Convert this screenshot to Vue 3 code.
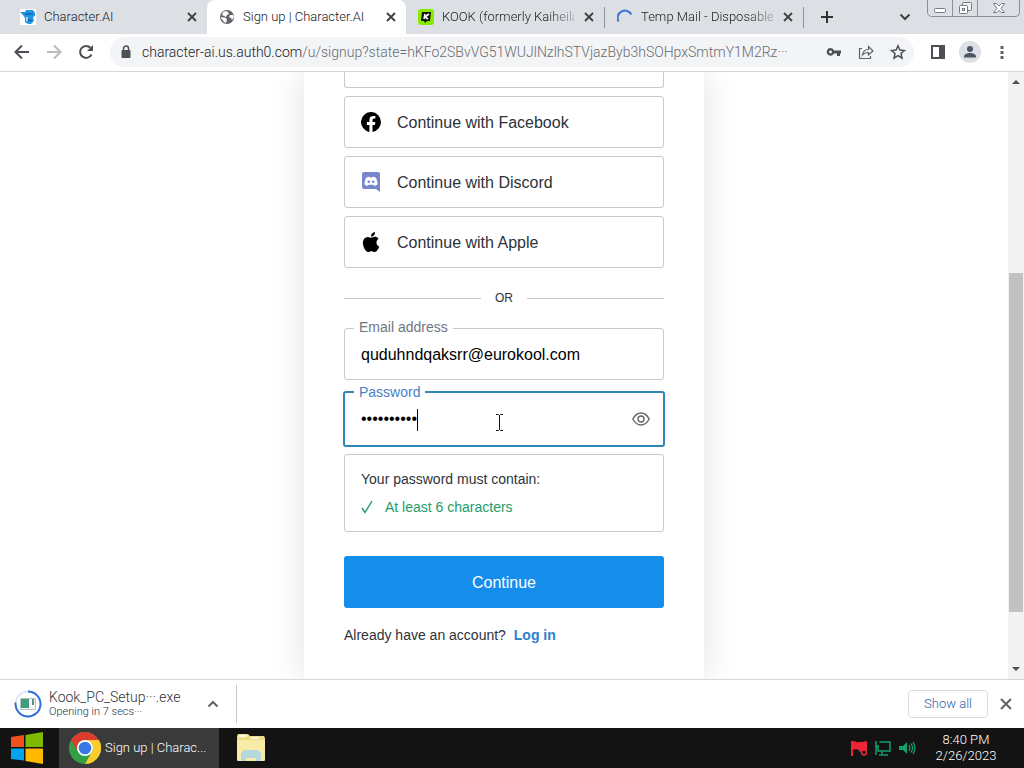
<script setup>
import { ref } from "vue";

const tabs = [
  { title: "Character.AI", icon: "character" },
  { title: "Sign up | Character.AI", icon: "globe", active: true },
  { title: "KOOK (formerly Kaiheila", icon: "kook", fade: true },
  { title: "Temp Mail - Disposable", icon: "loading", fade: true },
];

const providers = ["Facebook", "Discord", "Apple"];

const email = ref("quduhndqaksrr@eurokool.com");
const password = ref("abcdef1234");
const urlPath =
  "/u/signup?state=hKFo2SBvVG51WUJlNzlhSTVjazByb3hSOHpxSmtmY1M2Rz···";
</script>

<template>
  <div class="desktop">
    <header class="tab-strip">
      <div
        v-for="tab in tabs"
        :key="tab.title"
        class="tab"
        :class="{ active: tab.active }"
      >
        <svg v-if="tab.icon === 'character'" class="favicon" viewBox="0 0 16 16">
          <rect width="16" height="16" fill="#fff" />
          <path d="M0 3l5 0 1-2h7l2 3v3l-2 1 1 4-3 3H8l-3-2V9L3 6z" fill="#2196e3" />
          <path d="M5 5h8M8 9l1 3 3-1" stroke="#134a9c" fill="none" />
          <path d="M6 8h2v4H6z" fill="#9fd8f5" />
        </svg>
        <svg v-else-if="tab.icon === 'globe'" class="favicon" viewBox="0 0 16 16">
          <circle cx="8" cy="8" r="7" fill="#5f6368" />
          <path d="M2 8l5 1 1 2-1 3-2-1-3-4zM7 2l2 1 1 2-2 1-1 2-4-2 1-3zM14 6l-3 0-1 2 2 1 1 2 2-3z" fill="#fff" />
        </svg>
        <svg v-else-if="tab.icon === 'kook'" class="favicon" viewBox="0 0 16 16">
          <rect width="16" height="16" rx="3" fill="#87eb00" />
          <path d="M4 3h9l-1 9H9l-2 2-1-2H3z" fill="#111" />
          <path d="M7 5L6 10M11 5L7 8l3 2" stroke="#fff" stroke-width="1.6" fill="none" />
        </svg>
        <svg v-else class="favicon" viewBox="0 0 16 16">
          <path d="M1.500 12.500A7 7 0 0 1 14.500 5.500" fill="none" stroke="#3b78d8" stroke-width="2" />
        </svg>
        <span class="tab-title" :class="{ fade: tab.fade }">{{ tab.title }}</span>
        <button class="icon-button tab-close" aria-label="Close tab">
          <svg width="10" height="10" viewBox="0 0 10 10">
            <path d="M1 1l8 8M9 1l-8 8" stroke="#3c4043" stroke-width="1.8" />
          </svg>
        </button>
      </div>
      <button class="icon-button new-tab" aria-label="New tab">
        <svg width="14" height="14" viewBox="0 0 14 14">
          <path d="M7 1v12M1 7h12" stroke="#303336" stroke-width="2" />
        </svg>
      </button>
      <button class="icon-button tab-search" aria-label="Search tabs">
        <svg width="12" height="8" viewBox="0 0 12 8">
          <path d="M1.500 1.500L6 6l4.500-4.500" fill="none" stroke="#3c4043" stroke-width="2" />
        </svg>
      </button>
      <div class="window-controls">
        <button aria-label="Minimize">
          <svg width="14" height="16" viewBox="0 0 14 16">
            <rect x="1.500" y="8.500" width="11" height="4" rx="1" fill="#fff" stroke="#737b86" />
          </svg>
        </button>
        <button aria-label="Restore">
          <svg width="14" height="16" viewBox="0 0 14 16">
            <rect x="4.500" y="2.500" width="9" height="8" rx="1" fill="#eef0f3" stroke="#737b86" />
            <rect x="1.500" y="5.500" width="8" height="8" rx="1" fill="#fff" stroke="#737b86" />
            <rect x="4.500" y="8.500" width="2" height="2" fill="none" stroke="#737b86" />
          </svg>
        </button>
        <button class="wide" aria-label="Close">
          <svg width="14" height="16" viewBox="0 0 14 16">
            <path d="M1.500 3.500h3L7 6l2.500-2.500h3L9 8.500l3.500 4h-3L7 10.500l-2.500 2h-3L5 8.500z" fill="#fff" stroke="#737b86" />
          </svg>
        </button>
      </div>
    </header>

    <nav class="toolbar">
      <button class="icon-button" aria-label="Back">
        <svg width="16" height="16" viewBox="0 0 16 16">
          <path d="M15 8H2M8 1.500L1.500 8 8 14.500" fill="none" stroke="#4c5054" stroke-width="2" />
        </svg>
      </button>
      <button class="icon-button" aria-label="Forward">
        <svg width="16" height="16" viewBox="0 0 16 16">
          <path d="M1 8h13M8 1.500L14.500 8 8 14.500" fill="none" stroke="#b9bbbe" stroke-width="2" />
        </svg>
      </button>
      <button class="icon-button" aria-label="Reload">
        <svg width="16" height="16" viewBox="0 0 16 16">
          <path d="M13.500 10.500A6 6 0 1 1 12.500 3.800" fill="none" stroke="#4c5054" stroke-width="2" />
          <path d="M15 1v6H9z" fill="#4c5054" />
        </svg>
      </button>
      <div class="address">
        <svg class="lock" width="10" height="14" viewBox="0 0 10 14">
          <rect x="0.500" y="5" width="9" height="8" rx="1" fill="#4c5054" />
          <path d="M2.500 6V3.500a2.500 2.500 0 0 1 5 0V6" fill="none" stroke="#4c5054" stroke-width="1.5" />
        </svg>
        <div class="url"><span class="host">character-ai.us.auth0.com</span>{{ urlPath }}</div>
        <button class="icon-button" aria-label="Passwords">
          <svg width="16" height="16" viewBox="0 0 16 16">
            <path d="M4.500 4a3.800 3.800 0 1 0 3.500 5.500h3V12h3V9.500h1v-3H8A3.800 3.800 0 0 0 4.500 4zm0 2.500a1.400 1.400 0 1 1 0 2.900 1.400 1.400 0 0 1 0-2.900z" fill="#4c5054" fill-rule="evenodd" />
          </svg>
        </button>
        <button class="icon-button" aria-label="Share">
          <svg width="16" height="16" viewBox="0 0 16 16">
            <path d="M4 4.500H1.500v10h11V12M4.500 11c.5-4 2.500-5.500 6-5.500V2.500L15 7l-4.500 4V8.500c-3 0-4.500.500-6 2.500z" fill="none" stroke="#5f6368" stroke-width="1.200" />
          </svg>
        </button>
        <button class="icon-button" aria-label="Bookmark">
          <svg width="16" height="16" viewBox="0 0 16 16">
            <path d="M8 1.800l1.900 4.200 4.600.500-3.500 3 1 4.600-4-2.400-4 2.400 1-4.600-3.500-3 4.600-.500z" fill="none" stroke="#4c5054" stroke-width="1.500" />
          </svg>
        </button>
      </div>
      <button class="icon-button" aria-label="Side panel">
        <svg width="16" height="16" viewBox="0 0 16 16">
          <path d="M2 2h12v12H2z" fill="none" stroke="#4c5054" stroke-width="2" />
          <path d="M9 2h5v12H9z" fill="#4c5054" />
        </svg>
      </button>
      <button class="icon-button" aria-label="Profile">
        <svg width="22" height="22" viewBox="0 0 22 22">
          <circle cx="11" cy="11" r="11" fill="#dcdfe4" />
          <circle cx="11" cy="8" r="3" fill="#4b5563" />
          <path d="M5 16.500v-1c0-2 3-3.500 6-3.500s6 1.500 6 3.500v1z" fill="#4b5563" />
        </svg>
      </button>
      <button class="icon-button" aria-label="Menu">
        <svg width="16" height="16" viewBox="0 0 16 16">
          <path d="M6.500 2h3v3h-3zM6.500 7h3v3h-3zM6.500 12h3v3h-3z" fill="#5f6368" />
        </svg>
      </button>
    </nav>

    <div class="viewport">
      <main class="page">
        <section class="card">
          <div class="provider-cut"></div>
          <button v-for="name in providers" :key="name" class="provider">
            <svg v-if="name === 'Facebook'" width="20" height="20" viewBox="0 0 24 24">
              <path d="M24 12a12 12 0 1 0-13.900 11.900v-8.400H7.100V12h3V9.400c0-3 1.800-4.700 4.500-4.700 1.300 0 2.700.2 2.700.2v3h-1.500c-1.500 0-2 .9-2 1.900V12h3.400l-.5 3.500h-2.900v8.400A12 12 0 0 0 24 12z" />
            </svg>
            <svg v-else-if="name === 'Discord'" width="20" height="20" viewBox="0 0 20 20">
              <path d="M3 0h14a2 2 0 0 1 2 2v18l-4-3H3a2 2 0 0 1-2-2V2a2 2 0 0 1 2-2z" fill="#7687ce" />
              <path d="M5 6c1.300-1 2.500-1.200 3.500-1.200l.5.700h2l.5-.7c1 0 2.200.2 3.500 1.200 1 2 1.500 4 1.500 6.500-1 1-2 1.300-3.300 1.300l-.8-1H7.600l-.8 1c-1.300 0-2.300-.3-3.300-1.300C3.500 10 4 8 5 6z" fill="#fff" />
              <circle cx="7.800" cy="9.800" r="1.300" fill="#7687ce" />
              <circle cx="12.200" cy="9.800" r="1.300" fill="#7687ce" />
            </svg>
            <svg v-else width="20" height="20" viewBox="0 0 24 24">
              <path d="M12.152 6.896c-.948 0-2.415-1.078-3.960-1.040-2.040.027-3.910 1.183-4.961 3.014-2.117 3.675-.546 9.103 1.519 12.090 1.013 1.454 2.208 3.090 3.792 3.039 1.520-.065 2.090-.987 3.935-.987 1.831 0 2.350.987 3.960.948 1.637-.026 2.676-1.480 3.676-2.948 1.156-1.688 1.636-3.325 1.662-3.415-.039-.013-3.182-1.221-3.220-4.857-.026-3.040 2.480-4.494 2.597-4.559-1.429-2.090-3.623-2.324-4.390-2.376-2-.156-3.675 1.090-4.610 1.090zM15.530 3.830c.843-1.012 1.400-2.427 1.245-3.830-1.207.052-2.662.805-3.532 1.818-.780.896-1.454 2.338-1.273 3.714 1.338.104 2.715-.688 3.559-1.701" />
            </svg>
            <span>Continue with {{ name }}</span>
          </button>

          <div class="divider"><span>OR</span></div>

          <form @submit.prevent>
            <div class="field">
              <label for="email">Email address</label>
              <input id="email" v-model="email" type="email" />
            </div>
            <div class="field focused">
              <label for="password">Password</label>
              <input id="password" v-model="password" type="password" />
              <span class="caret"></span>
              <svg class="pointer" width="9" height="17" viewBox="0 0 9 17">
                <path d="M1 .5h2.500l1 1 1-1H8M4.500 1v15M1 16.500h2.500l1-1 1 1H8" fill="none" stroke="#111" />
              </svg>
              <button type="button" class="icon-button reveal" aria-label="Show password">
                <svg width="18" height="14" viewBox="0 0 18 14">
                  <path d="M.800 7C3 3 5.700 1 9 1s6 2 8.200 6c-2.200 4-4.900 6-8.200 6S3 11 .800 7z" fill="none" stroke="#65676e" stroke-width="1.400" />
                  <circle cx="9" cy="7" r="3" fill="none" stroke="#65676e" stroke-width="1.400" />
                </svg>
              </button>
            </div>
            <div class="rules">
              <p>Your password must contain:</p>
              <p class="passed">
                <svg width="12" height="14" viewBox="0 0 12 14">
                  <path d="M1 8l3 4.500L11 1" fill="none" stroke="#1e9c6b" stroke-width="1.400" />
                </svg>
                At least 6 characters
              </p>
            </div>
            <button class="submit">Continue</button>
          </form>
          <p class="login">Already have an account? <a href="#">Log in</a></p>
        </section>
      </main>
      <div class="scrollbar">
        <svg width="8" height="4" viewBox="0 0 8 4"><path d="M0 4l4-4 4 4z" fill="#505050" /></svg>
        <div class="track"><div class="thumb"></div></div>
        <svg width="8" height="4" viewBox="0 0 8 4"><path d="M0 0l4 4 4-4z" fill="#505050" /></svg>
      </div>
    </div>

    <section class="downloads">
      <div class="download">
        <svg width="28" height="28" viewBox="0 0 28 28">
          <circle cx="14" cy="14" r="12.500" fill="#fff" stroke="#d5e2f7" stroke-width="1.500" />
          <path d="M14 1.500A12.500 12.500 0 1 1 1.600 12.500" fill="none" stroke="#2f70d8" stroke-width="2" />
          <path d="M6.500 8.500h15v11h-15z" fill="#f4f7f6" stroke="#b8c4c1" />
          <path d="M7 9h8v9H7z" fill="#3f9c83" />
          <path d="M18 9h2v6h-2z" fill="#5b8f86" />
        </svg>
        <div class="download-text">
          <span class="file">Kook_PC_Setup···.exe</span>
          <span class="status">Opening in 7 secs···</span>
        </div>
        <button class="icon-button" aria-label="Download options">
          <svg width="12" height="8" viewBox="0 0 12 8">
            <path d="M1.500 6.500L6 2l4.500 4.500" fill="none" stroke="#5f6368" stroke-width="2" />
          </svg>
        </button>
      </div>
      <button class="show-all">Show all</button>
      <button class="icon-button" aria-label="Close downloads">
        <svg width="12" height="12" viewBox="0 0 12 12">
          <path d="M1 1l10 10M11 1L1 11" stroke="#5f6368" stroke-width="2" />
        </svg>
      </button>
    </section>

    <footer class="taskbar">
      <button class="start" aria-label="Start">
        <svg width="34" height="34" viewBox="0 0 34 34">
          <path d="M1 6l13-2v12H1z" fill="#f0511f" />
          <path d="M15.500 4L33 1v15H15.500z" fill="#7fba00" />
          <path d="M1 17.500h13v12L1 28z" fill="#00a4ef" />
          <path d="M15.500 17.500H33V33l-17.500-3z" fill="#ffb900" />
        </svg>
      </button>
      <button class="task">
        <svg width="32" height="32" viewBox="0 0 32 32">
          <circle cx="16" cy="16" r="16" fill="#34a045" />
          <path d="M2.200 8A16 16 0 0 1 29.900 8H16a8 8 0 0 0-6.900 12z" fill="#dd3b2e" />
          <path d="M29.900 8A16 16 0 0 1 16 32l6.900-12A8 8 0 0 0 16 8z" fill="#fccb2c" />
          <circle cx="16" cy="16" r="8" fill="#fff" />
          <circle cx="16" cy="16" r="6.300" fill="#3577e5" />
        </svg>
        <span>Sign up | Charac...</span>
      </button>
      <button class="explorer" aria-label="File Explorer">
        <svg width="30" height="30" viewBox="0 0 30 30">
          <path d="M1 3l1-2h10l2 2h14l1 2v22l-1 1H2l-1-1z" fill="#efdc88" />
          <path d="M1 7h28v20l-1 1H2l-1-1z" fill="#f6eca6" />
          <path d="M3 2h8v2H3zM15 4h8v2h-8z" fill="#fbf7dc" />
          <path d="M5 28v-8l3-3h14l3 3v8h-5v-3h-10v3z" fill="#b4d8dc" />
        </svg>
      </button>
      <div class="tray">
        <svg width="18" height="18" viewBox="0 0 18 18">
          <path d="M2 2v15" stroke="#ef2435" stroke-width="2" />
          <path d="M2 3c2-1 4-1 6 1V3c3 0 5 0 9-1v9c-3 0-6 1-8 2v-2c-2-1-4-1-7 0z" fill="#ef2435" />
          <circle cx="14" cy="13.500" r="2.500" fill="#131313" stroke="#ef2435" stroke-width="1.500" />
        </svg>
        <svg width="18" height="18" viewBox="0 0 18 18">
          <path d="M5.500 3H16v9H4V7M2 2v5h3M2 7v9M8 12v3M5 16h9" fill="none" stroke="#16a06b" stroke-width="1.500" />
        </svg>
        <svg width="18" height="18" viewBox="0 0 18 18">
          <path d="M1 7h4l4-4v12l-4-4H1z" fill="#16a06b" />
          <path d="M11 6c1 2 1 4 0 6M13 4.500c2 3 2 6 0 9M15 3c2.500 4 2.500 8 0 12" fill="none" stroke="#16a06b" stroke-width="1.300" />
        </svg>
      </div>
      <div class="clock">
        <span>8:40 PM</span>
        <span>2/26/2023</span>
      </div>
    </footer>
  </div>
</template>

<style>
body {
  margin: 0;
}
</style>

<style scoped>
.desktop {
  display: flex;
  flex-direction: column;
  height: 100vh;
  overflow: hidden;
  background: #fff;
  color: #2d333a;
  font-family: "Liberation Sans", Arial, sans-serif;
}

.desktop * {
  box-sizing: border-box;
}

button {
  padding: 0;
  border: none;
  background: none;
  font: inherit;
  color: inherit;
}

svg {
  display: block;
  flex-shrink: 0;
}

.icon-button {
  display: flex;
  align-items: center;
  justify-content: center;
  flex-shrink: 0;
}

.tab-strip,
.toolbar,
.downloads,
.taskbar {
  font-family: Roboto, sans-serif;
  font-size: 13px;
  font-weight: 300;
  line-height: 16px;
}

.tab-strip {
  display: flex;
  align-items: stretch;
  flex-shrink: 0;
  height: 34px;
  padding-left: 8px;
  background: #dce0e5;
}

.tab {
  display: flex;
  align-items: center;
  flex: 0 1 199px;
  min-width: 0;
  padding: 0 10px 0 12px;
  border-radius: 8px 8px 0 0;
  color: #202124;
}

.tab.active {
  background: #fff;
}

.tab:nth-child(3),
.tab:nth-child(4) {
  border-right: 1px solid #8c9197;
  border-image: linear-gradient(transparent 8px, #8c9197 8px, #8c9197 27px, transparent 27px) 1;
}

.favicon {
  width: 16px;
  height: 16px;
  margin-right: 8px;
}

.tab-title {
  flex: 1;
  min-width: 0;
  white-space: nowrap;
}

.tab-title.fade {
  mask-image: linear-gradient(to right, #000 80%, rgba(0, 0, 0, 0.3));
}

.tab-close {
  width: 10px;
  margin-left: 10px;
}

.new-tab {
  width: 46px;
}

.tab-search {
  width: 24px;
  margin-left: auto;
}

.window-controls {
  display: flex;
  height: 17px;
  margin: 0 4px 0 10px;
  border: 1px solid #8b9097;
  border-top: none;
  border-radius: 0 0 5px 5px;
}

.window-controls button {
  display: flex;
  align-items: center;
  justify-content: center;
  width: 25px;
  border-right: 1px solid #8b9097;
}

.window-controls .wide {
  width: 41px;
  border-right: none;
}

.toolbar {
  display: flex;
  align-items: center;
  flex-shrink: 0;
  gap: 16px;
  height: 38px;
  padding: 0 14px 2px;
  border-bottom: 1px solid #d5d7da;
}

.toolbar > .icon-button {
  width: 16px;
}

.address {
  display: flex;
  align-items: center;
  flex: 1;
  gap: 16px;
  min-width: 0;
  height: 30px;
  padding: 0 8px 0 11px;
  border-radius: 15px;
  background: #f3f4f6;
}

.lock {
  margin-right: -5px;
}

.url {
  flex: 1;
  min-width: 0;
  font-size: 14px;
  white-space: nowrap;
  color: #676b70;
}

.host {
  color: #202124;
}

.viewport {
  display: flex;
  flex: 1;
  min-height: 0;
}

.page {
  flex: 1;
  overflow: hidden;
}

.card {
  width: 400px;
  min-height: 100%;
  margin: 0 auto;
  padding: 0 40px;
  box-shadow: 0 0 32px rgba(0, 0, 0, 0.12);
}

.provider-cut,
.provider {
  width: 100%;
  margin-bottom: 8px;
  border: 1px solid #c9cace;
  border-radius: 3px;
}

.provider-cut {
  height: 16px;
  border-top: none;
  border-radius: 0 0 3px 3px;
}

.provider {
  display: flex;
  align-items: center;
  gap: 16px;
  height: 52px;
  padding: 0 16px;
  font-size: 16px;
  line-height: 20px;
}

.provider span {
  padding-top: 2px;
}

.divider {
  display: flex;
  align-items: center;
  gap: 14px;
  height: 16px;
  margin: 22px 0;
  font-size: 12px;
}

.divider::before,
.divider::after {
  content: "";
  flex: 1;
  height: 1px;
  background: #c9cace;
}

.field {
  position: relative;
  height: 52px;
  margin-bottom: 11px;
  border: 1px solid #c9cace;
  border-radius: 3px;
}

.field label {
  position: absolute;
  top: -10px;
  left: 9px;
  padding: 0 5px;
  background: #fff;
  font-size: 14px;
  line-height: 16px;
  color: #6f7780;
}

.field input {
  width: 100%;
  height: 100%;
  padding: 2px 48px 0 16px;
  border: none;
  outline: none;
  background: none;
  font-family: inherit;
  font-size: 16px;
  color: #000;
}

.field.focused {
  height: 56px;
  margin: 0 -1px 7px;
  border: 2px solid #2e87b8;
}

.field.focused input {
  padding-top: 0;
}

.field.focused label {
  top: -9px;
  color: #4a80c4;
}

.caret {
  position: absolute;
  top: 16px;
  left: 72px;
  width: 1px;
  height: 22px;
  background: #000;
}

.pointer {
  position: absolute;
  top: 21px;
  left: 150px;
}

.reveal {
  position: absolute;
  top: 0;
  right: 13px;
  height: 100%;
}

.rules {
  padding: 14px 16px;
  border: 1px solid #c9cace;
  border-radius: 3px;
  font-size: 14px;
  line-height: 20px;
}

.rules p {
  margin: 0;
}

.rules .passed {
  display: flex;
  align-items: center;
  gap: 12px;
  margin-top: 8px;
  color: #1e9c6b;
}

.submit {
  width: 100%;
  height: 52px;
  margin-top: 24px;
  padding-top: 2px;
  border-radius: 3px;
  background: #158deb;
  font-size: 16px;
  line-height: 20px;
  color: #fff;
}

.login {
  margin: 17px 0 0;
  font-size: 14px;
  line-height: 20px;
}

.login a {
  margin-left: 4px;
  font-weight: bold;
  color: #2c80cc;
  text-decoration: none;
}

.scrollbar {
  display: flex;
  flex-direction: column;
  align-items: center;
  width: 16px;
  padding: 8px 0;
  background: #f3f3f3;
}

.track {
  flex: 1;
  width: 14px;
  padding: 4px 0;
}

.thumb {
  height: 59%;
  margin-top: 185px;
  background: #c1c1c1;
}

.downloads {
  display: flex;
  align-items: center;
  flex-shrink: 0;
  height: 49px;
  padding-right: 12px;
  border-top: 1px solid #d5d7da;
}

.download {
  display: flex;
  align-items: center;
  width: 237px;
  height: 38px;
  padding: 0 17px 0 14px;
  border-right: 1px solid #c6c8cb;
}

.download-text {
  display: flex;
  flex: 1;
  flex-direction: column;
  margin-left: 7px;
}

.file {
  font-size: 14px;
}

.status {
  font-size: 11px;
  line-height: 14px;
}

.show-all {
  height: 28px;
  margin: 0 12px 0 auto;
  padding: 0 15px;
  border: 1px solid #d8dadd;
  border-radius: 4px;
  color: #2861a8;
}

.taskbar {
  display: flex;
  align-items: center;
  flex-shrink: 0;
  height: 40px;
  background: #131313;
  color: #fff;
}

.start {
  padding: 0 15px 0 10px;
}

.task {
  display: flex;
  align-items: center;
  gap: 4px;
  width: 160px;
  height: 40px;
  padding-left: 10px;
  background: #3a3a3a;
  white-space: nowrap;
}

.explorer {
  margin-left: 17px;
}

.tray {
  display: flex;
  gap: 6px;
  margin-left: auto;
}

.clock {
  display: flex;
  flex-direction: column;
  align-items: center;
  width: 100px;
  margin-right: 8px;
}
</style>
